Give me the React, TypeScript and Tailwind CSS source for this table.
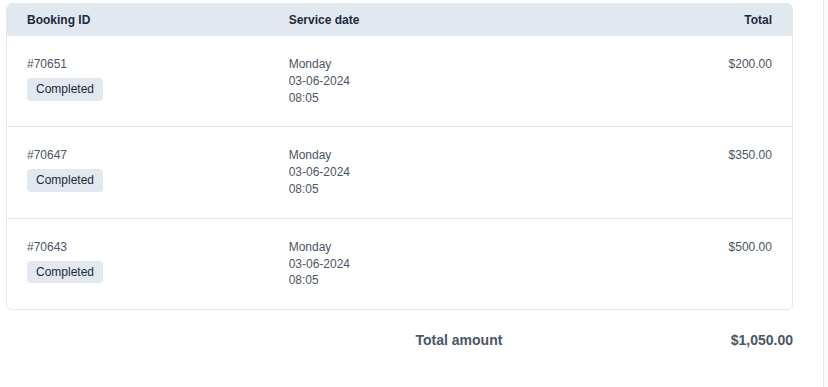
import React from 'react';

interface IBooking {
  id: string;
  day: string;
  date: string;
  time: string;
  total: string;
}

const bookings: IBooking[] = [
  { id: '#70651', day: 'Monday', date: '03-06-2024', time: '08:05', total: '$200.00' },
  { id: '#70647', day: 'Monday', date: '03-06-2024', time: '08:05', total: '$350.00' },
  { id: '#70643', day: 'Monday', date: '03-06-2024', time: '08:05', total: '$500.00' },
];

export default function App() {
  return (
    <div
      className="flex h-[387px] w-full bg-white"
      style={{ fontFamily: '"Liberation Sans", Arial, sans-serif' }}
    >
      <section className="flex-1 pl-[6px] pr-[30px] pt-[3px]">
        <div className="overflow-hidden rounded-md border border-[#e2e8f0]">
          <div className="grid h-[32px] grid-cols-3 items-center bg-[#e2e8f0] text-[12px] font-bold text-[#1e293b]">
            <p className="px-5">Booking ID</p>
            <p className="px-5">Service date</p>
            <p className="px-5 text-right">Total</p>
          </div>
          {bookings.map((booking, index) => (
            <div
              key={booking.id}
              className={`grid grid-cols-3 py-5 text-[12px] leading-[16.8px] text-[#4b5563] ${
                index > 0 ? 'border-t border-[#e2e8f0]' : ''
              }`}
            >
              <div className="px-5">
                <p>{booking.id}</p>
                <span className="mt-[5px] inline-block rounded-[4px] bg-[#e2e8f0] px-[9px] py-[3px] text-[#1e293b]">
                  Completed
                </span>
              </div>
              <div className="px-5">
                <p>{booking.day}</p>
                <p>{booking.date}</p>
                <p>{booking.time}</p>
              </div>
              <p className="px-5 text-right">{booking.total}</p>
            </div>
          ))}
        </div>
        <div className="ml-auto mt-[20px] flex w-1/2 items-center justify-between pl-4 text-[14px] font-bold text-[#4b5563]">
          <p>Total amount</p>
          <p>$1,050.00</p>
        </div>
      </section>
      <aside className="w-[5px] border-l border-[#e2e8f0] bg-[#f8fafc]" />
    </div>
  );
}
